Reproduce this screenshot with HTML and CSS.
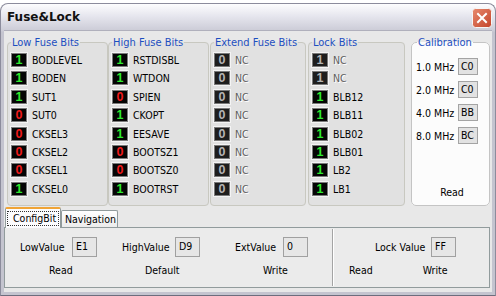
FILE: index.html
```html
<!DOCTYPE html>
<html>
<head>
<meta charset="utf-8">
<link rel="stylesheet" href="styles.css">
</head>
<body>
<div class="window">
  <div class="titlebar">
    <span class="title">Fuse&amp;Lock</span>
    <span class="close"><svg width="20" height="20" viewBox="0 0 20 20"><defs><linearGradient id="cg" x1="0" y1="0" x2="1" y2="1"><stop offset="0" stop-color="#e88a6e"/><stop offset="1" stop-color="#c3432a"/></linearGradient></defs><rect x="0.5" y="0.5" width="19" height="19" rx="3" fill="url(#cg)" stroke="#f6f6f6"/><path d="M6 6 L14 14 M14 6 L6 14" stroke="#fff" stroke-width="2" stroke-linecap="square"/></svg></span>
  </div>
  <div class="client">
    <div class="groups">
      <fieldset class="grp g-low">
        <legend>Low Fuse Bits</legend>
        <div class="bits">
          <div class="bit"><span class="led on">1</span><span class="lbl">BODLEVEL</span></div>
          <div class="bit"><span class="led on">1</span><span class="lbl">BODEN</span></div>
          <div class="bit"><span class="led on">1</span><span class="lbl">SUT1</span></div>
          <div class="bit"><span class="led off">0</span><span class="lbl">SUT0</span></div>
          <div class="bit"><span class="led off">0</span><span class="lbl">CKSEL3</span></div>
          <div class="bit"><span class="led off">0</span><span class="lbl">CKSEL2</span></div>
          <div class="bit"><span class="led off">0</span><span class="lbl">CKSEL1</span></div>
          <div class="bit"><span class="led on">1</span><span class="lbl">CKSEL0</span></div>
        </div>
      </fieldset>
      <fieldset class="grp g-high">
        <legend>High Fuse Bits</legend>
        <div class="bits">
          <div class="bit"><span class="led on">1</span><span class="lbl">RSTDISBL</span></div>
          <div class="bit"><span class="led on">1</span><span class="lbl">WTDON</span></div>
          <div class="bit"><span class="led off">0</span><span class="lbl">SPIEN</span></div>
          <div class="bit"><span class="led on">1</span><span class="lbl">CKOPT</span></div>
          <div class="bit"><span class="led on">1</span><span class="lbl">EESAVE</span></div>
          <div class="bit"><span class="led off">0</span><span class="lbl">BOOTSZ1</span></div>
          <div class="bit"><span class="led off">0</span><span class="lbl">BOOTSZ0</span></div>
          <div class="bit"><span class="led on">1</span><span class="lbl">BOOTRST</span></div>
        </div>
      </fieldset>
      <fieldset class="grp g-ext">
        <legend>Extend Fuse Bits</legend>
        <div class="bits">
          <div class="bit"><span class="led dis">0</span><span class="lbl dim">NC</span></div>
          <div class="bit"><span class="led dis">0</span><span class="lbl dim">NC</span></div>
          <div class="bit"><span class="led dis">0</span><span class="lbl dim">NC</span></div>
          <div class="bit"><span class="led dis">0</span><span class="lbl dim">NC</span></div>
          <div class="bit"><span class="led dis">0</span><span class="lbl dim">NC</span></div>
          <div class="bit"><span class="led dis">0</span><span class="lbl dim">NC</span></div>
          <div class="bit"><span class="led dis">0</span><span class="lbl dim">NC</span></div>
          <div class="bit"><span class="led dis">0</span><span class="lbl dim">NC</span></div>
        </div>
      </fieldset>
      <fieldset class="grp g-lock">
        <legend>Lock Bits</legend>
        <div class="bits">
          <div class="bit"><span class="led dis">1</span><span class="lbl dim">NC</span></div>
          <div class="bit"><span class="led dis">1</span><span class="lbl dim">NC</span></div>
          <div class="bit"><span class="led on">1</span><span class="lbl">BLB12</span></div>
          <div class="bit"><span class="led on">1</span><span class="lbl">BLB11</span></div>
          <div class="bit"><span class="led on">1</span><span class="lbl">BLB02</span></div>
          <div class="bit"><span class="led on">1</span><span class="lbl">BLB01</span></div>
          <div class="bit"><span class="led on">1</span><span class="lbl">LB2</span></div>
          <div class="bit"><span class="led on">1</span><span class="lbl">LB1</span></div>
        </div>
      </fieldset>
      <fieldset class="grp g-cal">
        <legend>Calibration</legend>
        <div class="calbody">
          <div class="calrow"><span class="mhz">1.0 MHz</span><span class="hexbox">C0</span></div>
          <div class="calrow"><span class="mhz">2.0 MHz</span><span class="hexbox">C0</span></div>
          <div class="calrow"><span class="mhz">4.0 MHz</span><span class="hexbox">BB</span></div>
          <div class="calrow"><span class="mhz">8.0 MHz</span><span class="hexbox">BC</span></div>
          <div class="calread">Read</div>
        </div>
      </fieldset>
    </div>
    <div class="tabs">
      <span class="tab active"><span class="focus">ConfigBit</span></span>
      <span class="tab">Navigation</span>
    </div>
    <div class="panel">
      <div class="sec-left">
        <div class="col c1">
          <div class="vrow"><span class="vlbl">LowValue</span><span class="vbox">E1</span></div>
          <div class="btn">Read</div>
        </div>
        <div class="col c2">
          <div class="vrow"><span class="vlbl">HighValue</span><span class="vbox">D9</span></div>
          <div class="btn">Default</div>
        </div>
        <div class="col c3">
          <div class="vrow"><span class="vlbl">ExtValue</span><span class="vbox">0</span></div>
          <div class="btn">Write</div>
        </div>
      </div>
      <div class="divider"></div>
      <div class="sec-right">
        <div class="vrow lockrow"><span class="vlbl">Lock Value</span><span class="vbox">FF</span></div>
        <div class="btnrow"><span class="btn">Read</span><span class="btn">Write</span></div>
      </div>
    </div>
  </div>
</div>
</body>
</html>
```

FILE: styles.css
```css
html, body {
  margin: 0;
  padding: 0;
}
body {
  background: #ffffff;
  width: 496px;
  height: 296px;
  overflow: hidden;
  font-family: "DejaVu Sans Condensed", "Liberation Sans", sans-serif;
  font-stretch: condensed;
  font-size: 10.5px;
  color: #000;
}
.window {
  margin-top: 3px;
  width: 496px;
  height: 293px;
  box-sizing: border-box;
  border-radius: 8px 8px 0 0;
  background: linear-gradient(to bottom, #fdfdfe 0px, #e6e6ee 12px, #cbcbd6 27px, #c4c4cf 28px, #c4c4cf 100%);
  border: 1px solid #8c8c9c;
  border-bottom-color: #6d6d7d;
  display: flex;
  flex-direction: column;
}
.titlebar {
  height: 26px;
  display: flex;
  align-items: center;
  justify-content: space-between;
  padding: 0 3px 0 6px;
}
.title {
  font-family: "DejaVu Sans", sans-serif;
  font-stretch: normal;
  font-weight: bold;
  font-size: 12px;
  color: #111;
}
.close {
  width: 20px;
  height: 20px;
  margin-top: 1px;
}
.close svg { display: block; }
.client {
  margin: 0 3px;
  height: 262px;
  background: #e8e8e8;
  box-sizing: border-box;
  border-top: 1px solid #b0b0bc;
}
.groups {
  display: flex;
  padding: 5px 0 0 3px;
  height: 176px;
  box-sizing: border-box;
}
.grp {
  margin: 0;
  padding: 0 0 0 3px;
  border: 1px solid #c8c8c0;
  border-radius: 4px;
  height: 170px;
  box-sizing: border-box;
  min-width: 0;
  background: #e1e1e1;
}
.grp legend {
  padding: 0 1px;
  margin: 0;
  font-size: 11px;
  line-height: 13px;
  color: #1d4fc0;
}
.g-low { width: 101px; }
.g-high { width: 101px; }
.g-ext { width: 96px; margin-left: 1px; }
.g-lock { width: 97px; margin-left: 2px; }
.g-cal {
  width: 79px;
  margin-left: 6px;
  background: #fcfcfc;
  border-color: #c4c4c4;
  border-radius: 5px;
}
.g-cal legend { margin-left: 2px; }
.bits {
  display: flex;
  flex-direction: column;
  gap: 4.4px;
  padding-top: 4px;
}
.bit {
  display: flex;
  align-items: center;
  height: 14px;
}
.led {
  width: 16px;
  height: 14px;
  box-sizing: border-box;
  background: #050505;
  border: 1px solid #7a7a7a;
  box-shadow: 0 0 0 1px #f4f4f4;
  font-family: "Liberation Sans", sans-serif;
  font-weight: bold;
  font-size: 12.5px;
  line-height: 12px;
  text-align: center;
}
.led.on { color: #2ee82e; }
.led.off { color: #f01c1c; }
.led.dis { color: #b4b4b4; background: #1e1e1e; }
.lbl {
  margin-left: 5px;
  white-space: nowrap;
}
.lbl.dim {
  color: #5e5e5e;
  text-shadow: 1px 1px 0 #ffffff;
}
.calbody {
  display: flex;
  flex-direction: column;
  height: 151px;
  padding-top: 9px;
  box-sizing: border-box;
}
.calrow {
  display: flex;
  align-items: center;
  height: 17px;
  margin-bottom: 6px;
}
.mhz {
  width: 43px;
  padding-left: 1px;
  box-sizing: border-box;
  white-space: nowrap;
}
.hexbox {
  width: 20px;
  height: 17px;
  box-sizing: border-box;
  background: #e2e2e2;
  border: 1px solid #a4a4a4;
  padding-left: 2px;
  line-height: 15px;
}
.calread {
  margin-top: auto;
  text-align: center;
  line-height: 13px;
  padding-bottom: 1px;
}
.tabs {
  display: flex;
  align-items: flex-end;
  height: 20px;
  padding-left: 1px;
  position: relative;
  z-index: 1;
}
.tab {
  height: 17px;
  box-sizing: border-box;
  border: 1px solid #919b9c;
  border-bottom: none;
  border-radius: 2px 2px 0 0;
  background: linear-gradient(to bottom, #ffffff, #ececec);
  padding: 0 3px;
  line-height: 16px;
  width: 57px;
  text-align: center;
}
.tab.active {
  height: 21px;
  width: 56px;
  margin-bottom: -1px;
  background: #fcfcfe;
  border-top: 2px solid #f0a436;
  padding: 2px 1px 0;
  text-align: left;
}
.focus {
  display: block;
  border: 1px dotted #333;
  height: 15px;
  box-sizing: border-box;
  line-height: 13px;
  padding-left: 5px;
}
.panel {
  height: 61px;
  margin-right: 2px;
  box-sizing: border-box;
  border: 1px solid #919b9c;
  background: #ebebeb;
  display: flex;
}
.sec-left {
  display: flex;
  width: 327px;
  padding-left: 15px;
  box-sizing: border-box;
}
.col {
  display: flex;
  flex-direction: column;
}
.c2 { margin-left: 25px; }
.c3 { margin-left: 35px; }
.vrow {
  display: flex;
  align-items: center;
  height: 20px;
  margin-top: 9px;
}
.c1 .vlbl { width: 52px; }
.c2 .vlbl { width: 53px; }
.c3 .vlbl { width: 48px; }
.vbox {
  width: 25px;
  height: 20px;
  box-sizing: border-box;
  border: 1px solid #a0a0a0;
  background: #e6e6e6;
  padding-left: 3px;
  line-height: 17px;
}
.btn {
  margin-top: 7px;
  line-height: 13px;
}
.c1 .btn { margin-left: 29px; }
.c2 .btn { margin-left: 23px; }
.c3 .btn { margin-left: 28px; }
.divider {
  width: 0;
  margin: 1px 0;
  border-left: 1px solid #a4a4a4;
  border-right: 1px solid #ffffff;
}
.sec-right {
  display: flex;
  flex-direction: column;
}
.lockrow { margin-left: 41px; }
.lockrow .vlbl { width: 56px; }
.btnrow {
  display: flex;
  padding-left: 15px;
}
.btnrow .btn + .btn { margin-left: 50px; }
```
